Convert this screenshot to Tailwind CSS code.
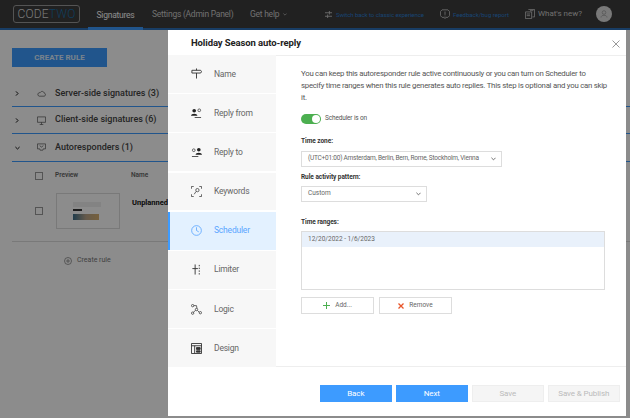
<!DOCTYPE html>
<html lang="en">
<head>
  <meta charset="UTF-8">
  <title>CodeTwo Signatures</title>
  <script src="https://cdn.jsdelivr.net/npm/@tailwindcss/browser@4"></script>
</head>
<body class="relative w-[630px] h-[418px] overflow-hidden bg-white font-['Roboto',sans-serif] text-[#333]">

  <!-- Top bar -->
  <header class="flex items-center h-[30px] pl-[13px] pr-[18px] bg-[#3c3c3c] border-b-2 border-[#2d6fb8] whitespace-nowrap">
    <div class="flex items-center justify-center w-[67px] h-[18px] border border-[#999] rounded-[3px] text-[12px] font-light tracking-[0.2px]">
      <span class="text-[#ddd]">CODE</span><span class="text-[#1d6fa8]">TWO</span>
    </div>
    <nav class="flex h-full ml-[8px] text-[8.500px] tracking-[-0.25px] text-[#ccc]">
      <div class="relative flex items-center justify-center w-[55px] h-[30px] text-white">Signatures<span class="absolute left-0 right-0 bottom-0 h-[3px] bg-[#3d9bff]"></span></div>
      <div class="flex items-center ml-[9px] w-[80px]">Settings (Admin Panel)</div>
      <div class="flex items-center ml-[18px]">Get help
        <svg class="ml-[4px] w-[4px] h-[3px]" viewBox="0 0 6 4" fill="none" stroke="#ccc"><path d="M.5.500L3 3 5.500.5"/></svg>
      </div>
    </nav>
    <div class="flex items-center ml-auto">
      <svg class="w-[7px] h-[7px]" viewBox="0 0 8 8" fill="none" stroke="#ccc"><path d="M0 2h8M0 6h8M5 0v4M3 4v4"/></svg>
      <span class="ml-[4px] text-[6px] tracking-[-0.05px] text-[#2d7fd0]">Switch back to classic experience</span>
      <svg class="ml-[16px] w-[10px] h-[10px]" viewBox="0 0 12 12" fill="none" stroke="#ccc"><path d="M2.500 1h7l2 2v5l-2 2H7L6 11.500 5 10H2.500l-2-2V3zM6 3v4M6 8v1"/></svg>
      <span class="ml-[3px] text-[6px] text-[#2d7fd0]">Feedback/bug report</span>
      <svg class="ml-[16px] w-[10px] h-[10px]" viewBox="0 0 12 12" fill="none" stroke="#ccc"><path d="M4 .5h7.500v9H9M.5 3.500H8v8H.5zM2 6h4M2 8h4M6 2h4"/></svg>
      <span class="ml-[3px] text-[8px] text-[#ccc]">What's new?</span>
      <div class="flex items-center justify-center ml-[14px] w-[16px] h-[16px] rounded-full bg-[#ddd]">
        <svg class="w-[8px] h-[8px]" viewBox="0 0 8 8" fill="none" stroke="#aaa"><circle cx="4" cy="2.500" r="1.800"/><path d="M1 7.500c0-3 6-3 6 0"/></svg>
      </div>
    </div>
  </header>

  <!-- Page behind the dialog -->
  <main class="pl-[12px] pt-[18px] whitespace-nowrap">
    <button class="flex items-center justify-center w-[95px] h-[19px] bg-[#3d9bff] text-[#ddeeff] text-[8px] font-bold">CREATE RULE</button>
    <div class="mt-[14px] text-[9px] text-[#444] font-medium">
      <div class="flex items-center h-[26px] border-b border-[#3d9bff]">
        <svg class="ml-[3px] w-[4px] h-[5px]" viewBox="0 0 4 6" fill="none" stroke="#111" stroke-width="1.200"><path d="M.8.500L3.200 3 .8 5.500"/></svg>
        <svg class="ml-[18px] w-[9px] h-[9px]" viewBox="0 0 10 10" fill="none" stroke="#555" stroke-width=".8"><path d="M2.500 8h5.500a1.800 1.800 0 0 0 0-3.500C7.500 2.500 5 1.800 3.500 4 2 4 .5 5 1 6.500 1.200 7.500 2 8 2.500 8z"/></svg>
        <span class="ml-[9px]">Server-side signatures (3)</span>
      </div>
      <div class="flex items-center h-[27px] border-b border-[#3d9bff]">
        <svg class="ml-[3px] w-[4px] h-[5px]" viewBox="0 0 4 6" fill="none" stroke="#111" stroke-width="1.200"><path d="M.8.500L3.200 3 .8 5.500"/></svg>
        <svg class="ml-[18px] w-[9px] h-[9px]" viewBox="0 0 10 10" fill="none" stroke="#555" stroke-width=".8"><path d="M.5 1h9v6h-9zM3 9.500h4M5 7v2.500"/></svg>
        <span class="ml-[9px]">Client-side signatures (6)</span>
      </div>
      <div class="flex items-center h-[28px] border-b border-[#3d9bff]">
        <svg class="ml-[3px] w-[5px] h-[4px]" viewBox="0 0 6 4" fill="none" stroke="#111" stroke-width="1.200"><path d="M.5.800L3 3.200 5.500.8"/></svg>
        <svg class="ml-[17px] w-[9px] h-[9px]" viewBox="0 0 10 10" fill="none" stroke="#555" stroke-width=".8"><path d="M.5 1h9v5.500H7L6.500 8h-3L3 6.500H.5zM3 3l2 1.500L7 3"/></svg>
        <span class="ml-[9px]">Autoresponders (1)</span>
      </div>
    </div>
    <div class="flex items-center h-[27px] text-[6.500px] font-semibold text-[#666]">
      <span class="ml-[23px] w-[8px] h-[8px] border border-[#999]"></span>
      <span class="ml-[12px] w-[76px]">Preview</span>
      <span>Name</span>
    </div>
    <div class="flex items-center h-[53px] pb-[8px] border-b border-[#ddd]">
      <span class="ml-[23px] w-[8px] h-[8px] border border-[#999]"></span>
      <div class="flex flex-col justify-center pl-[16px] ml-[13px] w-[64px] h-[36px] border border-[#ddd]">
        <span class="w-[28px] h-[5px] bg-[#eee]"></span>
        <span class="w-[9px] h-[2px] mt-[2px] bg-[#333]"></span>
        <span class="w-[26px] h-[6px] mt-[3px] bg-[linear-gradient(90deg,#3d6f8a,#b9a58a,#d8b070)]"></span>
      </div>
      <span class="ml-[12px] -mt-[16px] text-[7.500px] font-bold text-[#111]">Unplanned</span>
    </div>
    <div class="flex items-center h-[36px] pt-px text-[7px] text-[#777]">
      <svg class="ml-[52px] w-[8px] h-[8px]" viewBox="0 0 8 8" fill="none" stroke="#777" stroke-width=".7"><circle cx="4" cy="4" r="3.500"/><path d="M4 2v4M2 4h4"/></svg>
      <span class="ml-[5px]">Create rule</span>
    </div>
  </main>

  <!-- Dimmer -->
  <div class="absolute inset-0 bg-black/45"></div>

  <!-- Dialog -->
  <section class="absolute left-[168px] top-[30px] w-[458px] h-[386px] flex flex-col bg-white">
    <div class="flex items-center justify-between h-[25px] pl-[23px] pr-[5px] shrink-0">
      <h1 class="text-[9.500px] tracking-[-0.1px] font-bold text-[#222] mt-[2px]">Holiday Season auto-reply</h1>
      <svg class="w-[8px] h-[8px] mt-[2px] mr-[1px]" viewBox="0 0 8 8" fill="none" stroke="#999"><path d="M.5.500l7 7M7.500.5l-7 7"/></svg>
    </div>

    <div class="flex h-[311px] shrink-0">
      <!-- Steps -->
      <aside class="flex flex-col gap-[1.400px] w-[108px] text-[8.500px] tracking-[-0.2px] text-[#666]">
        <div class="flex items-center shrink-0 h-[37.800px] pl-[23px] bg-[#f7f7f7]">
          <svg class="w-[11px] h-[11px] shrink-0" viewBox="0 0 12 12" fill="none" stroke="#333"><path d="M1 2.500h9.500l1 1.500-1 1.500H1zM6 .5v2M6 5.500v6"/></svg>
          <span class="ml-[12px]">Name</span>
        </div>
        <div class="flex items-center shrink-0 h-[37.800px] pl-[23px] bg-[#f7f7f7]">
          <svg class="w-[11px] h-[11px] shrink-0" viewBox="0 0 12 12" fill="#222"><circle cx="3.500" cy="3" r="2"/><path d="M0 8.500c0-3 7-3 7 0zM4 10h7v.8H4z"/><circle cx="9" cy="2.500" r="1.500" fill="none" stroke="#222" stroke-width=".7"/></svg>
          <span class="ml-[12px]">Reply from</span>
        </div>
        <div class="flex items-center shrink-0 h-[37.800px] pl-[23px] bg-[#f7f7f7]">
          <svg class="w-[11px] h-[11px] shrink-0" viewBox="0 0 12 12" fill="#222"><circle cx="8.500" cy="3" r="2"/><path d="M5 8.500c0-3 7-3 7 0zM1 10h7v.8H1z"/><circle cx="3" cy="3.500" r="1.500" fill="none" stroke="#222" stroke-width=".7"/></svg>
          <span class="ml-[12px]">Reply to</span>
        </div>
        <div class="flex items-center shrink-0 h-[37.800px] pl-[23px] bg-[#f7f7f7]">
          <svg class="w-[11px] h-[11px] shrink-0" viewBox="0 0 12 12" fill="none" stroke="#333" stroke-width=".8"><path d="M.5 3V.5H3M9 .5h2.500V3M.5 9v2.500H3M9 11.500h2.500V9"/><circle cx="7" cy="4.500" r="1.800"/><path d="M5.500 6l-2 3"/></svg>
          <span class="ml-[12px]">Keywords</span>
        </div>
        <div class="flex items-center shrink-0 h-[37.800px] pl-[21px] bg-[#e3f1ff] border-l-2 border-[#3d9bff] text-[#5aa5ff]">
          <svg class="w-[11px] h-[11px] shrink-0" viewBox="0 0 12 12" fill="none" stroke="#5aa5ff" stroke-width=".9"><circle cx="6" cy="6" r="5.300"/><path d="M6 2.500V6l2.500 1.500"/></svg>
          <span class="ml-[12px]">Scheduler</span>
        </div>
        <div class="flex items-center shrink-0 h-[37.800px] pl-[23px] bg-[#f7f7f7]">
          <svg class="w-[11px] h-[11px] shrink-0" viewBox="0 0 12 12" fill="none" stroke="#333"><path d="M4.500.5v11M1.500 5h6M9 1v1.500M9 4v1.500M9 7v1.500M9 10v1.500"/></svg>
          <span class="ml-[12px]">Limiter</span>
        </div>
        <div class="flex items-center shrink-0 h-[37.800px] pl-[23px] bg-[#f7f7f7]">
          <svg class="w-[11px] h-[11px] shrink-0" viewBox="0 0 12 12" fill="none" stroke="#333" stroke-width=".8"><circle cx="1.800" cy="1.800" r="1.300"/><circle cx="6" cy="6" r="1.300"/><circle cx="1.800" cy="10" r="1.300"/><circle cx="10.200" cy="9.500" r="1.300"/><path d="M3 1.800h3l.5 3M2.500 9L5 7M7 7l2 2"/></svg>
          <span class="ml-[12px]">Logic</span>
        </div>
        <div class="flex items-center shrink-0 h-[37.800px] pl-[23px] bg-[#f7f7f7]">
          <svg class="w-[11px] h-[11px] shrink-0" viewBox="0 0 12 12" fill="none" stroke="#333"><path d="M.5.500h11v11H.5z"/><path d="M.5 3h11M4 3v8.500"/><path d="M6 5h4v2H6zM6 8.500h4v1.500H6z" fill="#333"/></svg>
          <span class="ml-[12px]">Design</span>
        </div>
      </aside>

      <!-- Scheduler step -->
      <div class="flex-1 pl-[25px] pr-[17px] pt-[12px] border-t border-[#eee]">
        <p class="text-[7.800px] tracking-[-0.25px] leading-[12px] text-[#555]">You can keep this autoresponder rule active continuously or you can turn on Scheduler to specify time ranges when this rule generates auto replies. This step is optional and you can skip it.</p>
        <div class="flex items-center mt-[10px] h-[10px]">
          <span class="relative w-[20px] h-[10px] rounded-full bg-[#4caf50]"><span class="absolute right-[1px] top-[1px] w-[8px] h-[8px] rounded-full bg-white"></span></span>
          <span class="ml-[4px] text-[6.500px] tracking-[-0.15px] text-[#555]">Scheduler is on</span>
        </div>
        <label class="block mt-[12px] text-[6.500px] tracking-[-0.05px] leading-[10px] font-bold text-[#333]">Time zone:</label>
        <div class="flex items-center justify-between mt-[5px] w-[201px] h-[16px] pl-[6px] pr-[5px] border border-[#ddd] text-[6.500px] tracking-[-0.22px] text-[#666] whitespace-nowrap">
          <span>(UTC+01:00) Amsterdam, Berlin, Bern, Rome, Stockholm, Vienna</span>
          <svg class="w-[5px] h-[4px]" viewBox="0 0 6 4" fill="none" stroke="#555"><path d="M.5.500L3 3 5.500.5"/></svg>
        </div>
        <label class="block mt-[5px] text-[6.500px] tracking-[-0.05px] leading-[10px] font-bold text-[#333]">Rule activity pattern:</label>
        <div class="flex items-center justify-between mt-[4px] w-[126px] h-[16px] pl-[6px] pr-[5px] border border-[#ddd] text-[6.500px] text-[#666]">
          <span>Custom</span>
          <svg class="w-[5px] h-[4px]" viewBox="0 0 6 4" fill="none" stroke="#555"><path d="M.5.500L3 3 5.500.5"/></svg>
        </div>
        <label class="block mt-[15px] text-[6.500px] tracking-[-0.05px] leading-[10px] font-bold text-[#333]">Time ranges:</label>
        <div class="mt-[4px] w-[304px] h-[59px] border border-[#ddd]">
          <div class="flex items-center h-[15px] pl-[6px] bg-[#e9f1fb] text-[6.500px] text-[#666]">12/20/2022 - 1/6/2023</div>
        </div>
        <div class="flex gap-[5px] mt-[7px]">
          <button class="flex items-center justify-center w-[73px] h-[17px] border border-[#ddd] text-[6.500px] text-[#666]">
            <svg class="w-[7px] h-[7px] mr-[5px]" viewBox="0 0 7 7" fill="none" stroke="#4caf50"><path d="M3.500 0v7M0 3.500h7"/></svg>Add...
          </button>
          <button class="flex items-center justify-center w-[73px] h-[17px] border border-[#ddd] text-[6.500px] text-[#666]">
            <svg class="w-[6px] h-[6px] mr-[5px]" viewBox="0 0 6 6" fill="none" stroke="#e8562a" stroke-width="1.300"><path d="M.5.500l5 5M5.500.5l-5 5"/></svg>Remove
          </button>
        </div>
      </div>
    </div>

    <!-- Footer -->
    <div class="flex-1 flex justify-end gap-[3.500px] ml-[108px] pt-[18px] pr-[6px] border-t border-[#eee] text-[8px] tracking-[-0.1px]">
      <button class="w-[72.500px] h-[17px] bg-[#3d9bff] text-white">Back</button>
      <button class="w-[72.500px] h-[17px] bg-[#3d9bff] text-white">Next</button>
      <button class="w-[72.500px] h-[17px] bg-[#f5f5f5] border border-[#eee] text-[#bbb]">Save</button>
      <button class="w-[72.500px] h-[17px] bg-[#f5f5f5] border border-[#eee] text-[#bbb]">Save &amp; Publish</button>
    </div>
  </section>
</body>
</html>
